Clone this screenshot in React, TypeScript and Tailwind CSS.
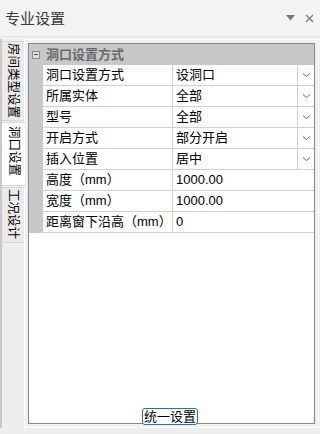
const rows = [
  { name: "洞口设置方式", value: "设洞口", drop: true },
  { name: "所属实体", value: "全部", drop: true },
  { name: "型号", value: "全部", drop: true },
  { name: "开启方式", value: "部分开启", drop: true },
  { name: "插入位置", value: "居中", drop: true },
  { name: "高度（mm）", value: "1000.00", drop: false },
  { name: "宽度（mm）", value: "1000.00", drop: false },
  { name: "距离窗下沿高（mm）", value: "0", drop: false },
];

const tabs = [
  { label: "房间类型设置", h: "h-[80px]", active: false },
  { label: "洞口设置", h: "h-[64px]", active: true },
  { label: "工况设计", h: "h-[56px]", active: false },
];

const Chevron = () => (
  <svg width="9" height="6" viewBox="0 0 9 6" fill="none">
    <path d="M1 1.5 L4.5 4.5 L8 1.5" stroke="#707070" strokeWidth="1" />
  </svg>
);

const App = () => {
  return (
    <div
      className="w-[320px] h-[434px] bg-[#eeeeee] flex flex-col overflow-hidden"
      style={{ fontFamily: '"Liberation Sans", "Noto Sans CJK SC", sans-serif' }}
    >
      {/* TITLE BAR */}
      <div className="h-[37px] shrink-0 bg-[#f3f3f3] border-b border-[#e2e2e2] flex items-center justify-between pl-[5px] pr-[6px]">
        <span className="text-[15px] text-[#3a3a3a] leading-none">专业设置</span>
        <div className="flex items-center gap-[10px] text-[#7a7a7a]">
          <svg width="9" height="6" viewBox="0 0 9 6">
            <path d="M0 0 H9 L4.5 5.5 Z" fill="#7a7a7a" />
          </svg>
          <svg width="9" height="9" viewBox="0 0 9 9">
            <path d="M1 1 L8 8 M8 1 L1 8" stroke="#7a7a7a" strokeWidth="1.3" />
          </svg>
        </div>
      </div>

      <div className="flex flex-1 min-h-0 pt-[2px] pb-[6px]">
        {/* SIDE TABS */}
        <div className="w-[24px] shrink-0 flex flex-col border-l-[2px] border-[#c9c9c9] pt-[1px]">
          {tabs.map((t) => (
            <div
              key={t.label}
              className={
                t.active
                  ? `${t.h} bg-white border-y border-[#d6d6d6] flex justify-center pt-[3px] mt-[1px] -mr-[1px] relative z-10`
                  : `${t.h} bg-[#ebebeb] border-y border-[#d6d6d6] flex justify-center pt-[1px] mt-[1px]`
              }
            >
              <span className="[writing-mode:vertical-rl] [text-orientation:sideways] whitespace-nowrap text-[12.5px] text-black leading-[18px]">
                {t.label}
              </span>
            </div>
          ))}
        </div>

        {/* CONTENT */}
        <div className="flex-1 border border-white bg-[#f0f0f0] p-[3px] mr-[1px] flex">
          <div className="flex-1 border border-[#828790] bg-white flex flex-col">
            {/* CATEGORY */}
            <div className="h-[21px] bg-[#c8c8c8] flex items-center">
              <div className="w-[14px] flex justify-center">
                <div className="w-[8px] h-[8px] border border-[#8a8a8a] bg-[#e0e0e0] flex items-center justify-center">
                  <div className="w-[4px] h-[1px] bg-[#555]" />
                </div>
              </div>
              <span className="pl-[3px] text-[13px] font-bold text-[#6a6a6a] leading-none">洞口设置方式</span>
            </div>

            {rows.map((r) => (
              <div key={r.name} className="h-[21px] flex">
                <div className="w-[14px] bg-[#c8c8c8]" />
                <div className="w-[130px] border-b border-r border-[#d0d0d0] flex items-center pl-[3px] text-[13px] text-black whitespace-nowrap">
                  {r.name}
                </div>
                <div className="flex-1 border-b border-[#d0d0d0] flex items-center justify-between pl-[3px] text-[13px] text-black">
                  <span>{r.value}</span>
                  {r.drop && (
                    <div className="w-[17px] h-[20px] border-l border-[#d0d0d0] flex items-center justify-center">
                      <Chevron />
                    </div>
                  )}
                </div>
              </div>
            ))}

            <div className="flex-1" />

            <div className="flex justify-center -mb-[2px] relative z-10 pr-[3px]">
              <button className="h-[17px] px-[1px] border border-[#1f6fd1] rounded-[3px] bg-white text-[13px] text-black leading-none">
                统一设置
              </button>
            </div>
          </div>
        </div>
      </div>
    </div>
  );
};

export default App;
